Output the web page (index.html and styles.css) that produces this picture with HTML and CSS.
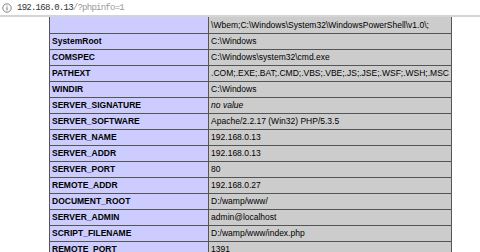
FILE: index.html
```html
<!DOCTYPE html>
<html lang="en">
<head>
  <meta charset="UTF-8" />
  <title>phpinfo()</title>
  <link rel="stylesheet" href="styles.css">
</head>
<body>
  <div class="addressbar">
    <svg class="info-icon" width="10" height="10" viewBox="0 0 10 10">
      <circle cx="5" cy="5" r="4.2" fill="none" stroke="#777" stroke-width="0.9"/>
      <rect x="4.5" y="4.2" width="1" height="3.2" fill="#777"/>
      <rect x="4.5" y="2.5" width="1" height="1" fill="#777"/>
    </svg>
    <span class="host">192.168.0.13</span><span class="path">/?phpinfo=1</span>
  </div>

  <div class="page">
    <table class="info">
      <tr class="cut"><td class="e"></td><td class="v">\Wbem;C:\Windows\System32\WindowsPowerShell\v1.0\;</td></tr>
      <tr><td class="e">SystemRoot</td><td class="v">C:\Windows</td></tr>
      <tr><td class="e">COMSPEC</td><td class="v">C:\Windows\system32\cmd.exe</td></tr>
      <tr><td class="e">PATHEXT</td><td class="v">.COM;.EXE;.BAT;.CMD;.VBS;.VBE;.JS;.JSE;.WSF;.WSH;.MSC</td></tr>
      <tr><td class="e">WINDIR</td><td class="v">C:\Windows</td></tr>
      <tr><td class="e">SERVER_SIGNATURE</td><td class="v"><i>no value</i></td></tr>
      <tr><td class="e">SERVER_SOFTWARE</td><td class="v">Apache/2.2.17 (Win32) PHP/5.3.5</td></tr>
      <tr><td class="e">SERVER_NAME</td><td class="v">192.168.0.13</td></tr>
      <tr><td class="e">SERVER_ADDR</td><td class="v">192.168.0.13</td></tr>
      <tr><td class="e">SERVER_PORT</td><td class="v">80</td></tr>
      <tr><td class="e">REMOTE_ADDR</td><td class="v">192.168.0.27</td></tr>
      <tr><td class="e">DOCUMENT_ROOT</td><td class="v">D:/wamp/www/</td></tr>
      <tr><td class="e">SERVER_ADMIN</td><td class="v">admin@localhost</td></tr>
      <tr><td class="e">SCRIPT_FILENAME</td><td class="v">D:/wamp/www/index.php</td></tr>
      <tr><td class="e">REMOTE_PORT</td><td class="v">1391</td></tr>
    </table>
  </div>
</body>
</html>
```

FILE: styles.css
```css
body {
  margin: 0;
  background: #fff;
  height: 252px;
  overflow: hidden;
}

.addressbar {
  height: 15px;
  display: flex;
  align-items: center;
  padding-left: 2px;
  border-bottom: 2px solid #d4d4d4;
  font-family: "Liberation Mono", monospace;
  font-size: 9px;
  letter-spacing: -0.75px;
}

.info-icon {
  margin-right: 5px;
}

.host {
  color: #333;
}

.path {
  color: #999;
}

.page {
  padding-left: 49px;
}

.info {
  border-collapse: collapse;
  width: 403px;
  font-family: "Liberation Sans", Arial, sans-serif;
  font-size: 8.5px;
  color: #000;
}

.info td {
  height: 15px;
  padding: 0 2px;
  border: 1px solid #555;
  white-space: nowrap;
  line-height: 15px;
}

.info tr.cut td {
  border-top: none;
  height: 16px;
}

.e {
  width: 157px;
  background: #ccccff;
  font-weight: bold;
}

.v {
  background: #cccccc;
}
```
